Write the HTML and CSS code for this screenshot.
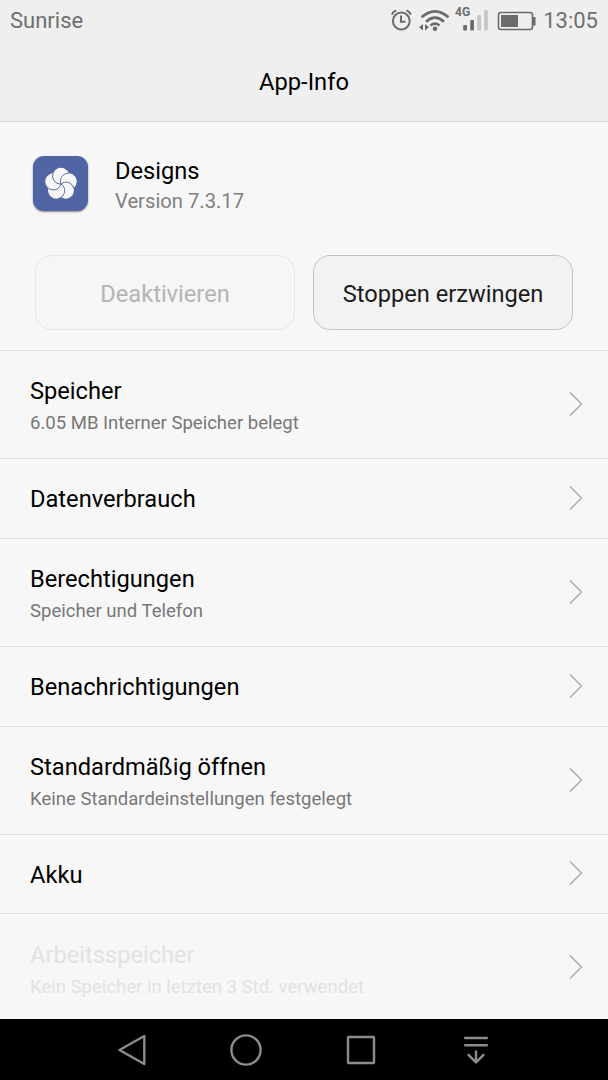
FILE: index.html
```html
<!DOCTYPE html>
<html lang="de">
<head>
  <meta charset="UTF-8" />
  <meta name="viewport" content="width=device-width, initial-scale=1.0"/>
  <title>App-Info</title>
  <link rel="stylesheet" href="styles.css">
</head>
<body>

  <header class="header">
    <!-- Status bar -->
    <div class="status-bar">
      <span class="carrier">Sunrise</span>
      <svg class="status-icons" width="150" height="41" viewBox="390 0 150 41" fill="none" stroke="#6b6b6b">
        <g stroke-width="2">
          <circle cx="401.3" cy="21" r="8.4"/>
          <path d="M401 15.5v6.2h4.5M391.8 14.6q1.2-3 4.4-4.2M406.4 10.4q3.2 1.2 4.4 4.2"/>
        </g>
        <g stroke-width="2.6">
          <path d="M421.5 17.3q13.5-12 27 0M426 21.7q9-8 18 0M430.5 25.4q4.5-3.6 9 0"/>
        </g>
        <g stroke="none" fill="#6b6b6b">
          <circle cx="435" cy="28.7" r="2.3"/>
          <path d="M423 24v6.5l-4-3.2zM425 24v6.5l4-3.2z"/>
          <text class="network" x="455" y="15.5">4G</text>
          <rect x="463.2" y="25" width="3.8" height="5.5" rx="1"/>
          <rect x="470.2" y="20" width="3.8" height="10.5" rx="1"/>
        </g>
        <g stroke="none" fill="#c6c6c6">
          <rect x="477.2" y="15" width="3.8" height="15.5" rx="1"/>
          <rect x="484.2" y="10" width="3.6" height="20.5" rx="1"/>
        </g>
        <rect x="498.5" y="12.5" width="34" height="17" rx="2.5" stroke-width="1.6"/>
        <path d="M501 15h17v12h-17zM533 17h2.5v8.5h-2.5z" fill="#6b6b6b" stroke="none"/>
      </svg>
      <span class="clock">13:05</span>
    </div>
    <h1>App-Info</h1>
  </header>

  <main>
    <section class="app">
      <div class="app-head">
        <div class="app-icon">
          <svg width="36" height="36" viewBox="-18 -18 36 36">
            <g fill="#f7f7f7">
              <circle cx="0" cy="-8" r="8.2"/>
              <circle cx="0" cy="-8" r="8.2" transform="rotate(72)"/>
              <circle cx="0" cy="-8" r="8.2" transform="rotate(144)"/>
              <circle cx="0" cy="-8" r="8.2" transform="rotate(216)"/>
              <circle cx="0" cy="-8" r="8.2" transform="rotate(288)"/>
            </g>
            <g fill="none" stroke="#5165a5" stroke-width="0.9">
              <path d="M0 0A7.8 7.8 0 0 1 7.8-10.7"/>
              <path d="M0 0A7.8 7.8 0 0 1 7.8-10.7" transform="rotate(72)"/>
              <path d="M0 0A7.8 7.8 0 0 1 7.8-10.7" transform="rotate(144)"/>
              <path d="M0 0A7.8 7.8 0 0 1 7.8-10.7" transform="rotate(216)"/>
              <path d="M0 0A7.8 7.8 0 0 1 7.8-10.7" transform="rotate(288)"/>
            </g>
          </svg>
        </div>
        <div>
          <div class="app-name">Designs</div>
          <div class="app-version">Version 7.3.17</div>
        </div>
      </div>
      <div class="btn-group">
        <button class="btn" disabled>Deaktivieren</button>
        <button class="btn">Stoppen erzwingen</button>
      </div>
    </section>

    <ul class="list">
      <li class="row tall">
        <div>
          <div class="title">Speicher</div>
          <div class="sub">6.05 MB Interner Speicher belegt</div>
        </div>
        <svg class="chevron" width="14" height="26" viewBox="0 0 14 26"><path d="M1 1.5L12.5 13L1 24.5"/></svg>
      </li>
      <li class="row">
        <div class="title">Datenverbrauch</div>
        <svg class="chevron" width="14" height="26" viewBox="0 0 14 26"><path d="M1 1.5L12.5 13L1 24.5"/></svg>
      </li>
      <li class="row tall">
        <div>
          <div class="title">Berechtigungen</div>
          <div class="sub">Speicher und Telefon</div>
        </div>
        <svg class="chevron" width="14" height="26" viewBox="0 0 14 26"><path d="M1 1.5L12.5 13L1 24.5"/></svg>
      </li>
      <li class="row">
        <div class="title">Benachrichtigungen</div>
        <svg class="chevron" width="14" height="26" viewBox="0 0 14 26"><path d="M1 1.5L12.5 13L1 24.5"/></svg>
      </li>
      <li class="row tall">
        <div>
          <div class="title">Standardmäßig öffnen</div>
          <div class="sub">Keine Standardeinstellungen festgelegt</div>
        </div>
        <svg class="chevron" width="14" height="26" viewBox="0 0 14 26"><path d="M1 1.5L12.5 13L1 24.5"/></svg>
      </li>
      <li class="row last">
        <div class="title">Akku</div>
        <svg class="chevron" width="14" height="26" viewBox="0 0 14 26"><path d="M1 1.5L12.5 13L1 24.5"/></svg>
      </li>
      <li class="row tall off">
        <div>
          <div class="title">Arbeitsspeicher</div>
          <div class="sub">Kein Speicher in letzten 3 Std. verwendet</div>
        </div>
        <svg class="chevron" width="14" height="26" viewBox="0 0 14 26"><path d="M1 1.5L12.5 13L1 24.5"/></svg>
      </li>
    </ul>
  </main>

  <!-- Navigation keys -->
  <nav class="nav-bar">
    <svg width="34" height="34" viewBox="0 0 34 34"><path d="M30.3 3v28L5.5 17z"/></svg>
    <svg width="34" height="34" viewBox="0 0 34 34"><circle cx="17" cy="17" r="14.6"/></svg>
    <svg width="34" height="34" viewBox="0 0 34 34"><rect x="4" y="4" width="26" height="26" rx="0.5"/></svg>
    <svg width="34" height="34" viewBox="0 0 34 34"><path d="M6.2 5h21.6M6.2 12.2h21.6M17 18.5v11M9.5 21.8l7.5 7.6 7.5-7.6"/></svg>
  </nav>

</body>
</html>
```

FILE: styles.css
```css
* {
  box-sizing: border-box;
}

body {
  margin: 0;
  height: 1080px;
  display: flex;
  flex-direction: column;
  font-family: Roboto, sans-serif;
  background-color: #f7f7f7;
  color: #000;
  overflow: hidden;
}

.header {
  height: 122px;
  background: #efefef;
  border-bottom: 1px solid #d9d9d9;
}

.status-bar {
  height: 41px;
  display: flex;
  align-items: center;
  padding: 0 10px;
  font-size: 22px;
  color: #6f6f6f;
}

.status-icons {
  margin-left: auto;
  margin-right: 3px;
}

.network {
  font-size: 12px;
  font-weight: bold;
}

h1 {
  margin: 0;
  font-size: 23.7px;
  font-weight: normal;
  line-height: 82px;
  text-align: center;
}

main {
  flex: 1;
  overflow: hidden;
}

.app {
  height: 229px;
  padding: 33px 35px 0;
  border-bottom: 1px solid #dedede;
}

.app-head {
  display: flex;
  gap: 27px;
  height: 100px;
  margin-left: -2px;
}

.app-icon {
  display: flex;
  align-items: center;
  justify-content: center;
  width: 55px;
  height: 55px;
  margin-top: 1px;
  border-radius: 11px;
  background: #5165a5;
  box-shadow: 0 1px 2px rgba(0, 0, 0, 0.45);
}

.app-name {
  font-size: 23.65px;
  line-height: 32px;
}

.app-version {
  font-size: 20.2px;
  line-height: 28px;
  color: #808080;
}

.btn-group {
  display: flex;
  gap: 18px;
}

.btn {
  width: 260px;
  height: 75px;
  padding: 2px 0 0;
  border: 1px solid #c2c2c2;
  border-radius: 17px;
  background: #f2f2f2;
  font-family: inherit;
  font-size: 23.65px;
  color: #1c1c1c;
}

.btn:disabled {
  border-color: #e6e6e6;
  background: #f6f6f6;
  color: #b5b5b5;
}

.list {
  margin: 0;
  padding: 0;
  list-style: none;
}

.row {
  display: flex;
  align-items: center;
  justify-content: space-between;
  height: 80px;
  padding: 0 25px 0 30px;
  border-bottom: 1px solid #dedede;
}

.row.tall {
  height: 108px;
}

.row.last {
  height: 79px;
}

.title {
  padding-top: 1px;
  font-size: 23.65px;
  line-height: 32px;
}

.tall .title {
  padding-top: 4px;
}

.sub {
  font-size: 18.55px;
  line-height: 32px;
  color: #777;
}

.off .title,
.off .sub {
  color: #e2e2e2;
}

.off .title {
  padding-top: 6px;
}

.chevron {
  margin-bottom: 2px;
  fill: none;
  stroke: #a8a8a8;
  stroke-width: 1.3;
}

.nav-bar {
  display: flex;
  justify-content: center;
  align-items: center;
  gap: 81px;
  height: 61px;
  padding-right: 1px;
  background: #000;
}

.nav-bar svg {
  fill: none;
  stroke: #8c8c8c;
  stroke-width: 2.4;
  stroke-linecap: round;
  stroke-linejoin: round;
}
```
